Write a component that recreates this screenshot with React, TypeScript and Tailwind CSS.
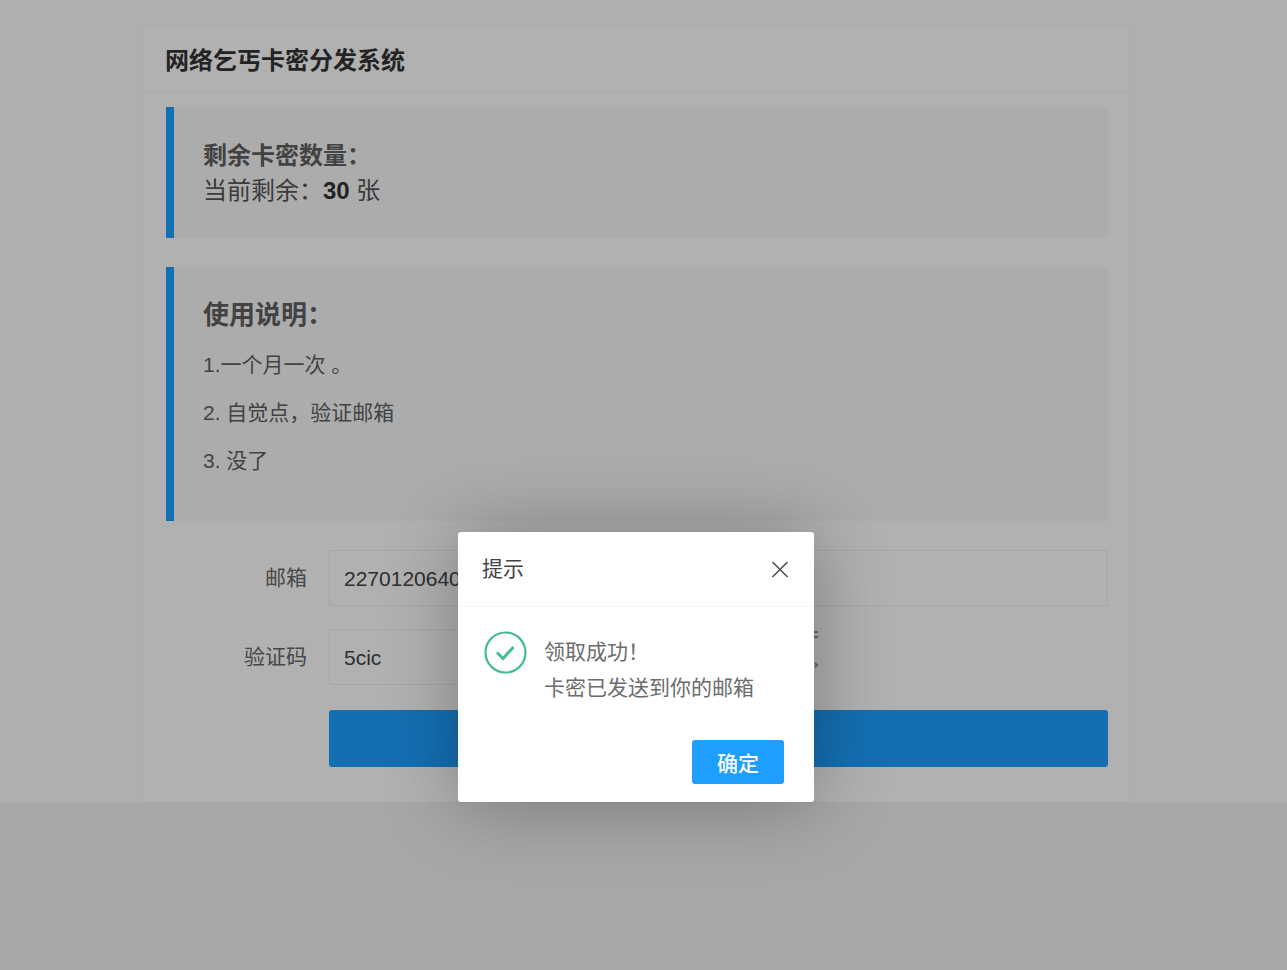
import type { ReactNode } from "react";

function Notice({ children }: { children: ReactNode }) {
  return (
    <section className="border-l-8 border-[#1e9fff] bg-[#f7f7f8] pl-[29px] pr-6 text-[#5f5f5f]">
      {children}
    </section>
  );
}

function FormRow({ label, htmlFor, children }: { label: string; htmlFor: string; children: ReactNode }) {
  return (
    <div className="flex items-center">
      <label htmlFor={htmlFor} className="w-[141px] shrink-0 text-right">
        {label}
      </label>
      <div className="ml-[22px] flex flex-1 items-center gap-3">{children}</div>
    </div>
  );
}

function Captcha() {
  return (
    <svg width="90" height="56" viewBox="0 0 90 56" fill="none" stroke="#999" strokeWidth="2" role="img" aria-label="验证码图片">
      <path d="M80 3h7M82 1v7M80 8h7M84 34l2 2-2 2" />
    </svg>
  );
}

function Dialog() {
  return (
    <div
      role="dialog"
      aria-labelledby="dialog-title"
      className="w-[356px] rounded-[3px] bg-white shadow-[1px_1px_75px_rgba(0,0,0,0.3)]"
    >
      <div className="flex h-[75px] items-center justify-between border-b border-[#f3f3f3] px-6">
        <h2 id="dialog-title" className="text-[#444]">提示</h2>
        <button type="button" title="关闭" className="cursor-pointer text-[#555]">
          <svg width="20" height="20" viewBox="0 0 20 20" fill="none" stroke="currentColor" strokeWidth="1.7">
            <path d="M2.5 3l15 15M17.5 3l-15 15" />
          </svg>
        </button>
      </div>
      <div className="flex gap-4 pl-[26px] pr-6 pt-[23px] text-[#6c6c6c]">
        <svg className="shrink-0" width="44" height="44" viewBox="0 0 44 44" fill="none" stroke="#45bd93">
          <circle cx="21.5" cy="22.5" r="20" strokeWidth="2.2" />
          <path d="M13 22.5l6 6 10.5-11.5" strokeWidth="3" />
        </svg>
        <p className="pt-1 leading-9">
          领取成功&#xFF01;
          <br />
          卡密已发送到你的邮箱
        </p>
      </div>
      <div className="flex justify-end pb-[18px] pr-[30px] pt-[34px]">
        <button type="button" className="h-11 w-[92px] cursor-pointer rounded-[3px] bg-[#1e9fff] pt-1 font-medium text-white">
          确定
        </button>
      </div>
    </div>
  );
}

export default function App() {
  return (
    <div className="relative min-h-screen bg-[#efefef] font-['Liberation_Sans','Noto_Sans_CJK_SC',sans-serif] text-[21px] text-[#666]">
      <div className="bg-[#fbfbfb] pr-[15px] pt-[27px]">
        <main className="mx-auto max-w-[988px] border border-[#f7f7f7] border-b-[#ebebeb] bg-[#fefefe]">
          <h1 className="flex h-[65px] items-center border-b border-[#f4f4f4] px-[22px] pt-0.5 text-2xl font-bold text-[#333]">
            网络乞丐卡密分发系统
          </h1>
          <div className="pb-[35px] pl-[23px] pr-[21px] pt-3.5">
            <Notice>
              <div className="pb-[30px] pt-[31px] text-2xl leading-[35px]">
                <h3 className="font-bold">剩余卡密数量&#xFF1A;</h3>
                <p className="text-[#555]">
                  当前剩余&#xFF1A;<strong className="text-[#333]">30</strong> 张
                </p>
              </div>
            </Notice>
            <div className="mt-[29px]">
              <Notice>
                <div className="pb-9 pt-[31px] leading-[48px]">
                  <h3 className="mb-[9px] text-[26px] font-bold leading-[34px]">使用说明&#xFF1A;</h3>
                  <p>1.一个月一次 。</p>
                  <p>2. 自觉点&#xFF0C;验证邮箱</p>
                  <p>3. 没了</p>
                </div>
              </Notice>
            </div>
            <form className="mt-[29px] flex flex-col gap-[23px]">
              <FormRow label="邮箱" htmlFor="email">
                <input id="email" defaultValue="2270120640" className="h-14 w-full border border-[#eee] px-3.5 pt-0.5 text-[#444]" />
              </FormRow>
              <FormRow label="验证码" htmlFor="code">
                <input id="code" defaultValue="5cic" className="h-14 w-1/2 border border-[#eee] px-3.5 pt-0.5 text-[#444]" />
                <Captcha />
              </FormRow>
              <button type="button" aria-label="领取" className="ml-[163px] mt-0.5 h-[57px] cursor-pointer rounded-[3px] bg-[#1e9fff]" />
            </form>
          </div>
        </main>
      </div>
      <div className="absolute inset-0 flex items-start justify-center bg-black/30 pr-[15px] pt-[532px]">
        <Dialog />
      </div>
    </div>
  );
}
